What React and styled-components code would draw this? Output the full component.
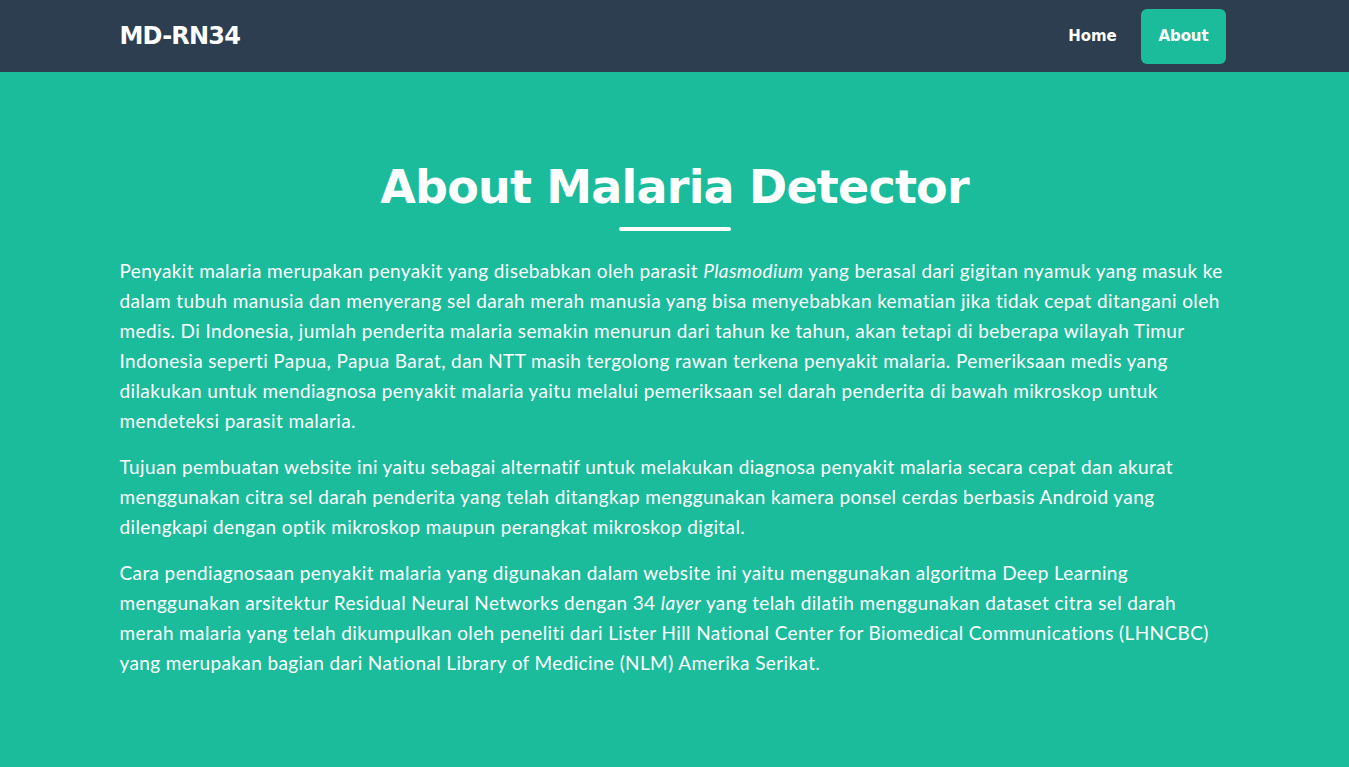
import React from "react";
import styled, { createGlobalStyle } from "styled-components";

const GlobalStyle = createGlobalStyle`
	html, body {
		margin: 0;
		padding: 0;
		background-color: #1abc9c;
	}
	* {
		box-sizing: border-box;
	}
`;

const Nav = styled.nav`
	height: 72px;
	background-color: #2c3e50;
	display: flex;
	justify-content: center;
`;

const NavInner = styled.div`
	width: 1110px;
	display: flex;
	align-items: center;
	justify-content: space-between;
`;

const Brand = styled.a`
	font-family: "DejaVu Sans", sans-serif;
	font-weight: 700;
	font-size: 24px;
	letter-spacing: -0.8px;
	color: #fff;
	text-decoration: none;
`;

const NavList = styled.div`
	display: flex;
	align-items: center;
	gap: 8px;
	margin-right: 4px;
`;

const NavLink = styled.a`
	font-family: "DejaVu Sans", sans-serif;
	font-weight: 700;
	font-size: 15px;
	letter-spacing: -0.1px;
	color: #fff;
	text-decoration: none;
	padding: 0 17px;
	height: 55px;
	display: flex;
	align-items: center;
	border-radius: 6px;
	background-color: ${(p) => (p.active ? "#1abc9c" : "transparent")};
`;

const Section = styled.section`
	background-color: #1abc9c;
	display: flex;
	justify-content: center;
	padding: 85px 0 80px;
`;

const Content = styled.div`
	width: 1110px;
	color: #fff;
`;

const Title = styled.h2`
	font-family: "DejaVu Sans", sans-serif;
	font-weight: 700;
	font-size: 46px;
	letter-spacing: -0.8px;
	line-height: 60px;
	text-align: center;
	margin: 0;
`;

const Divider = styled.div`
	width: 112px;
	height: 4px;
	border-radius: 2px;
	background-color: #fff;
	margin: 10px auto 25px;
`;

const Paragraph = styled.p`
	font-family: Lato, sans-serif;
	font-size: 19px;
	letter-spacing: 0.38px;
	line-height: 30px;
	margin: 0 0 16px;
`;

const App = () => {
	return (
		<>
			<GlobalStyle />
			<Nav>
				<NavInner>
					<Brand href="#">MD-RN34</Brand>
					<NavList>
						<NavLink href="#">Home</NavLink>
						<NavLink href="#" active>
							About
						</NavLink>
					</NavList>
				</NavInner>
			</Nav>

			<Section>
				<Content>
					<Title>About Malaria Detector</Title>
					<Divider />
					<Paragraph>
						Penyakit malaria merupakan penyakit yang disebabkan oleh parasit <em>Plasmodium</em> yang berasal dari
						gigitan nyamuk yang masuk ke dalam tubuh manusia dan menyerang sel darah merah manusia yang bisa
						menyebabkan kematian jika tidak cepat ditangani oleh medis. Di Indonesia, jumlah penderita malaria semakin
						menurun dari tahun ke tahun, akan tetapi di beberapa wilayah Timur Indonesia seperti Papua, Papua Barat,
						dan NTT masih tergolong rawan terkena penyakit malaria. Pemeriksaan medis yang dilakukan untuk
						mendiagnosa penyakit malaria yaitu melalui pemeriksaan sel darah penderita di bawah mikroskop untuk
						mendeteksi parasit malaria.
					</Paragraph>
					<Paragraph>
						Tujuan pembuatan website ini yaitu sebagai alternatif untuk melakukan diagnosa penyakit malaria secara
						cepat dan akurat menggunakan citra sel darah penderita yang telah ditangkap menggunakan kamera ponsel
						cerdas berbasis Android yang dilengkapi dengan optik mikroskop maupun perangkat mikroskop digital.
					</Paragraph>
					<Paragraph>
						Cara pendiagnosaan penyakit malaria yang digunakan dalam website ini yaitu menggunakan algoritma Deep
						Learning menggunakan arsitektur Residual Neural Networks dengan 34 <em>layer</em> yang telah dilatih
						menggunakan dataset citra sel darah merah malaria yang telah dikumpulkan oleh peneliti dari Lister Hill
						National Center for Biomedical Communications (LHNCBC) yang merupakan bagian dari National Library of
						Medicine (NLM) Amerika Serikat.
					</Paragraph>
				</Content>
			</Section>
		</>
	);
};

export default App;
